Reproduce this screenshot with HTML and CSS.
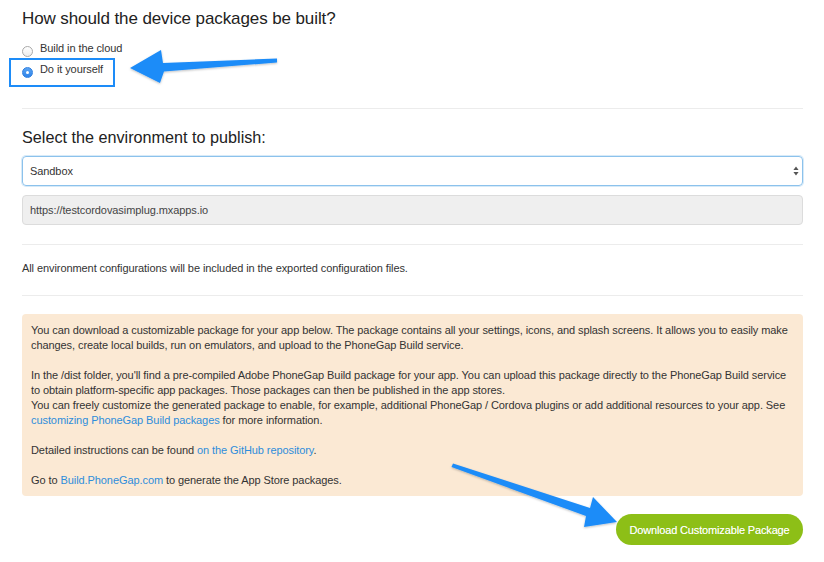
FILE: index.html
```html
<!DOCTYPE html>
<html>
<head>
<meta charset="utf-8">
<link rel="stylesheet" href="styles.css">
</head>
<body>
<div class="page">
  <h3 class="title">How should the device packages be built?</h3>
  <div class="radios">
    <label class="radio-row"><span class="radio"></span>Build in the cloud</label>
    <label class="radio-row"><span class="radio checked"></span>Do it yourself</label>
  </div>
  <div class="rule rule-1"></div>
  <h3 class="title title-2">Select the environment to publish:</h3>
  <div class="select">
    <span>Sandbox</span>
    <svg class="updown" width="6" height="10" viewBox="0 0 6 10"><path d="M3 0.5 L5.6 4 L0.4 4 Z M3 9.5 L5.6 6 L0.4 6 Z" fill="#555"/></svg>
  </div>
  <div class="input">https://testcordovasimplug.mxapps.io</div>
  <div class="rule rule-2"></div>
  <p class="note">All environment configurations will be included in the exported configuration files.</p>
  <div class="rule rule-3"></div>
  <div class="alert">
    <p>You can download a customizable package for your app below. The package contains all your settings, icons, and splash screens. It allows you to easily make changes, create local builds, run on emulators, and upload to the PhoneGap Build service.</p>
    <p>In the /dist folder, you'll find a pre-compiled Adobe PhoneGap Build package for your app. You can upload this package directly to the PhoneGap Build service to obtain platform-specific app packages. Those packages can then be published in the app stores.<br>You can freely customize the generated package to enable, for example, additional PhoneGap / Cordova plugins or add additional resources to your app. See <a href="#">customizing PhoneGap Build packages</a> for more information.</p>
    <p>Detailed instructions can be found <a href="#">on the GitHub repository</a>.</p>
    <p>Go to <a href="#">Build.PhoneGap.com</a> to generate the App Store packages.</p>
  </div>
  <div class="actions">
    <button class="btn">Download Customizable Package</button>
  </div>
</div>
<div class="highlight"></div>
<svg class="arrows" width="824" height="562" viewBox="0 0 824 562">
  <defs>
    <filter id="sh" x="-10%" y="-50%" width="120%" height="200%">
      <feDropShadow dx="0" dy="1" stdDeviation="1" flood-color="#000" flood-opacity="0.25"/>
    </filter>
  </defs>
  <g fill="#1d8cf8" filter="url(#sh)">
    <path d="M130 68 L161 50 L163 63 L277 58.5 L277 62.5 L164 71.5 L160 83 Z"/>
    <path d="M617 522 L593 497 L590 508 L453 463.5 L451.5 467 L586 516 L584 527 Z"/>
  </g>
</svg>
</body>
</html>
```
FILE: styles.css
```css
html, body {
  margin: 0;
  padding: 0;
  background: #fff;
}
body {
  font-family: "Liberation Sans", Arial, Helvetica, sans-serif;
  color: #333;
  font-size: 11px;
  line-height: 15px;
  letter-spacing: -0.08px;
  width: 824px;
  height: 562px;
  overflow: hidden;
  position: relative;
}
.page {
  padding: 9px 21px 0 22px;
  display: flex;
  flex-direction: column;
}
.title {
  margin: 0;
  font-size: 17px;
  line-height: 20px;
  letter-spacing: -0.1px;
  font-weight: normal;
  color: #222;
}
.radios {
  margin-top: 9px;
  display: flex;
  flex-direction: column;
}
.radio-row {
  display: flex;
  align-items: center;
  height: 21px;
  line-height: 21px;
  color: #333;
}
.radio {
  width: 11px;
  height: 11px;
  border-radius: 50%;
  border: 1px solid #a9a9a9;
  background: linear-gradient(#fff, #ececec);
  box-sizing: border-box;
  margin: 6px 7px 0 0;
  flex: none;
  position: relative;
}
.radio.checked {
  border-color: #2f7fe0;
  background: linear-gradient(#5aa3f2, #2f84ea);
}
.radio.checked::after {
  content: "";
  position: absolute;
  left: 3px;
  top: 3px;
  width: 3px;
  height: 3px;
  border-radius: 50%;
  background: #fff;
}
.rule {
  border-top: 1px solid #ececec;
}
.rule-1 { margin-top: 28px; }
.title-2 {
  margin-top: 18px;
  font-size: 16.2px;
  letter-spacing: 0;
}
.select {
  margin-top: 9px;
  height: 30px;
  box-sizing: border-box;
  border: 1px solid #8cc2ec;
  border-radius: 4px;
  box-shadow: 0 0 0 1px rgba(140, 194, 236, 0.35);
  display: flex;
  align-items: center;
  justify-content: space-between;
  padding: 0 3px 0 7px;
  color: #333;
}
.updown {
  display: block;
}
.input {
  margin-top: 9px;
  height: 30px;
  box-sizing: border-box;
  border: 1px solid #dcdcdc;
  border-radius: 4px;
  background: #efefef;
  display: flex;
  align-items: center;
  padding: 0 7px;
  color: #444;
}
.rule-2 { margin-top: 19px; }
.note {
  margin: 16px 0 0;
}
.rule-3 { margin-top: 19px; }
.alert {
  margin-top: 18px;
  background: #fbe9d4;
  border-radius: 4px;
  padding: 9px 9px 8px;
}
.alert p {
  margin: 0 0 15px;
}
.alert p:last-child {
  margin-bottom: 0;
}
.alert a {
  color: #2e8ddb;
  text-decoration: none;
}
.actions {
  margin-top: 18px;
  display: flex;
  justify-content: flex-end;
}
.btn {
  height: 31px;
  width: 187px;
  border: none;
  border-radius: 16px;
  background: #8dbf17;
  color: #fff;
  font-family: "Liberation Sans", Arial, Helvetica, sans-serif;
  font-size: 11px;
  letter-spacing: -0.15px;
  padding: 0;
  text-shadow: 0 0 0.5px rgba(255,255,255,0.6);
}
.highlight {
  position: absolute;
  left: 9px;
  top: 58px;
  width: 106px;
  height: 29px;
  box-sizing: border-box;
  border: 2px solid #1d8cf8;
}
.arrows {
  position: absolute;
  left: 0;
  top: 0;
  pointer-events: none;
}
```
